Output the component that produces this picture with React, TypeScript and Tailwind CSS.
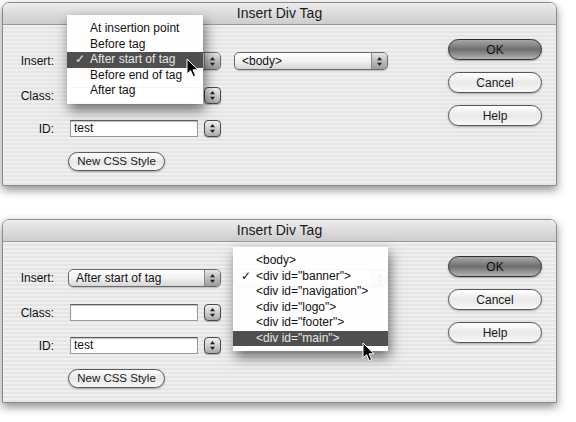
import React from "react";

const stripes =
  "bg-[repeating-linear-gradient(180deg,#efefef_0px,#efefef_2px,#e5e5e5_2px,#e5e5e5_4px)]";

function Arrows({ className = "" }: { className?: string }) {
  return (
    <svg width="7" height="11" viewBox="0 0 7 11" className={className}>
      <path d="M3.5 1L6 4.3H1z" fill="#222" />
      <path d="M1 6.7H6L3.5 10z" fill="#222" />
    </svg>
  );
}

function Stepper() {
  return (
    <div className="flex h-[17px] w-[17px] items-center justify-center rounded-[4px] border border-[#4a4a4a] bg-gradient-to-b from-[#f2f2f2] via-[#cfcfcf] to-[#a9a9a9] shadow-[0_1px_1px_rgba(0,0,0,0.25)]">
      <Arrows />
    </div>
  );
}

// value may be empty where a menu lies over the popup
function Popup({ value, width }: { value: string; width: string }) {
  return (
    <div
      className={`flex h-[18px] items-stretch overflow-hidden rounded-[5px] border border-[#6a6a6a] bg-gradient-to-b from-[#ffffff] via-[#f2f2f2] to-[#d6d6d6] shadow-[0_1px_1px_rgba(0,0,0,0.2)] ${width}`}
    >
      <span className="flex-1 truncate pl-[7px] text-[12px] leading-[16px] text-[#111]">{value}</span>
      <span className="flex w-[16px] items-center justify-center border-l border-[#8a8a8a] bg-gradient-to-b from-[#e6e6e6] via-[#bdbdbd] to-[#9c9c9c]">
        <Arrows />
      </span>
    </div>
  );
}

function Field({ value }: { value: string }) {
  return (
    <div className="h-[17px] w-[128px] border border-[#9a9a9a] border-t-[#5e5e5e] bg-white pl-[3px] text-[12px] leading-[15px] text-[#111] shadow-[inset_0_1px_1px_rgba(0,0,0,0.25)]">
      {value}
    </div>
  );
}

function AquaButton({ label, dark }: { label: string; dark?: boolean }) {
  return (
    <div
      className={`flex h-[21px] w-[94px] items-center justify-center rounded-full border text-[12px] ${
        dark
          ? "border-[#2e2e2e] bg-gradient-to-b from-[#a8a8a8] via-[#6e6e6e] to-[#b4b4b4] text-[#111]"
          : "border-[#555] bg-gradient-to-b from-[#ffffff] via-[#e9e9e9] to-[#f8f8f8] text-[#1a1a1a]"
      } shadow-[0_1px_2px_rgba(0,0,0,0.3)]`}
    >
      {label}
    </div>
  );
}

function Cursor({ className }: { className: string }) {
  return (
    <svg width="13" height="20" viewBox="0 0 13 20" className={className}>
      <path
        d="M1 1V16L4.6 12.6L7.2 18.6L9.6 17.6L7 11.8H12Z"
        fill="#000"
        stroke="#fff"
        strokeWidth="1"
        strokeLinejoin="round"
      />
    </svg>
  );
}

type MenuItem = { text: string; checked?: boolean; active?: boolean };

function Menu({ items, className }: { items: MenuItem[]; className: string }) {
  return (
    <div
      className={`absolute z-10 bg-white/95 pb-[5px] pt-[6px] shadow-[2px_6px_12px_rgba(0,0,0,0.55)] ${className}`}
    >
      {items.map((it) => (
        <div
          key={it.text}
          className={`flex h-[15.5px] items-center text-[12px] leading-[15px] ${
            it.active ? "bg-[#4f4f4f] text-[#e6e6e6]" : "text-[#111]"
          }`}
        >
          <span className="w-[23px] shrink-0 overflow-hidden pl-[8px] text-[12px]">{it.checked ? "✓" : ""}</span>
          <span className="whitespace-nowrap">{it.text}</span>
        </div>
      ))}
    </div>
  );
}

function Dialog({
  insert,
  target,
  className = "",
  children,
}: {
  insert: string;
  target: string;
  className?: string;
  children?: React.ReactNode;
}) {
  return (
    <div
      className={`relative w-[555px] rounded-t-[7px] border border-[#8c8c8c] shadow-[0_4px_10px_rgba(0,0,0,0.45)] ${className}`}
    >
      {/* Title bar */}
      <div className="flex h-[22px] items-center justify-center rounded-t-[6px] border-b border-[#9a9a9a] bg-gradient-to-b from-[#ececec] to-[#cdcdcd] text-[14px] text-[#1a1a1a]">
        Insert Div Tag
      </div>

      {/* Body */}
      <div className={`flex h-[160px] ${stripes}`}>
        <div className="pt-[27px] text-[12px] text-[#111]">
          <div className="flex h-[18px] items-center">
            <span className="w-[51px] text-right">Insert:</span>
            <div className="ml-[14px]">
              <Popup value={insert} width="w-[153px]" />
            </div>
            <div className="ml-[13px]">
              <Popup value={target} width="w-[154px]" />
            </div>
          </div>
          <div className="mt-[17px] flex h-[17px] items-center">
            <span className="w-[51px] text-right">Class:</span>
            <div className="ml-[16px]">
              <Field value="" />
            </div>
            <div className="ml-[6px]">
              <Stepper />
            </div>
          </div>
          <div className="mt-[16px] flex h-[17px] items-center">
            <span className="w-[51px] text-right">ID:</span>
            <div className="ml-[16px]">
              <Field value="test" />
            </div>
            <div className="ml-[6px]">
              <Stepper />
            </div>
          </div>
          <div className="ml-[65px] mt-[15px] flex h-[19px] w-[97px] items-center justify-center rounded-full border border-[#5a5a5a] bg-gradient-to-b from-[#ffffff] via-[#e8e8e8] to-[#f6f6f6] text-[11.5px] text-[#1a1a1a] shadow-[0_1px_2px_rgba(0,0,0,0.3)]">
            New CSS Style
          </div>
        </div>

        <div className="ml-auto flex flex-col gap-[12px] pr-[14px] pt-[14px]">
          <AquaButton label="OK" dark />
          <AquaButton label="Cancel" />
          <AquaButton label="Help" />
        </div>
      </div>
      {children}
    </div>
  );
}

export default function App() {
  return (
    <div className="h-[422px] w-[576px] bg-white pl-[2px] pt-[2px] font-['Liberation_Sans',Arial,sans-serif]">
      <Dialog insert="" target="<body>">
        <Menu
          className="left-[64px] top-[12px] w-[136px]"
          items={[
            { text: "At insertion point" },
            { text: "Before tag" },
            { text: "After start of tag", checked: true, active: true },
            { text: "Before end of tag" },
            { text: "After tag" },
          ]}
        />
        <Cursor className="absolute left-[183px] top-[55px] z-20" />
      </Dialog>

      <Dialog insert="After start of tag" target="" className="mt-[33px]">
        <Menu
          className="left-[230px] top-[27px] w-[155px]"
          items={[
            { text: "<body>" },
            { text: '<div id="banner">', checked: true },
            { text: '<div id="navigation">' },
            { text: '<div id="logo">' },
            { text: '<div id="footer">' },
            { text: '<div id="main">', active: true },
          ]}
        />
        <Cursor className="absolute left-[359px] top-[122px] z-20" />
      </Dialog>
    </div>
  );
}
